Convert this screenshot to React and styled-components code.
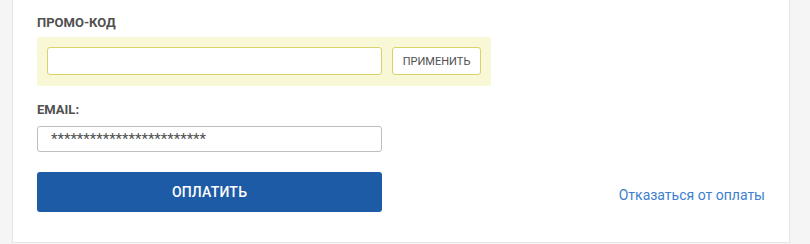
import React from 'react';
import styled, { createGlobalStyle } from 'styled-components';

const GlobalStyle = createGlobalStyle`
  html, body {
    margin: 0;
    padding: 0;
    background: #f5f5f5;
    font-family: Roboto, "Liberation Sans", Arial, sans-serif;
  }
`;

const Page = styled.div`
  width: 810px;
  height: 244px;
  overflow: hidden;
  padding-left: 12px;
  box-sizing: border-box;
`;

const Panel = styled.div`
  width: 778px;
  box-sizing: border-box;
  background: #fff;
  border: 1px solid #e6e6e6;
  border-top: none;
  padding: 15px 24px 30px;
`;

const Label = styled.div`
  font-size: 13px;
  line-height: 16px;
  font-weight: 700;
  color: #505050;
  text-transform: uppercase;
  margin-top: ${(props) => props.top || 0}px;
  margin-bottom: ${(props) => props.bottom || 6}px;
`;

const PromoBox = styled.div`
  display: flex;
  gap: 10px;
  width: 454px;
  box-sizing: border-box;
  padding: 10px 10px 11px;
  background: #f8f8d7;
  border-radius: 3px;
`;

const Input = styled.input`
  display: block;
  box-sizing: border-box;
  width: ${(props) => props.width}px;
  height: ${(props) => props.height}px;
  padding: 0 13px;
  border: 1px solid ${(props) => props.border || '#bdbdbd'};
  border-radius: 3px;
  background: #fff;
  font-family: Roboto, "Liberation Sans", Arial, sans-serif;
  font-size: ${(props) => props.size || 14}px;
  color: #505050;
  outline: none;
`;

const ApplyButton = styled.button`
  box-sizing: border-box;
  width: 89px;
  height: 28px;
  padding: 0;
  border: 1px solid #d8d26a;
  border-radius: 3px;
  background: #fff;
  font-family: Roboto, "Liberation Sans", Arial, sans-serif;
  font-size: 11px;
  color: #505050;
  text-transform: uppercase;
`;

const PayRow = styled.div`
  display: flex;
  justify-content: space-between;
  align-items: center;
  margin-top: 20px;
`;

const PayButton = styled.button`
  width: 345px;
  height: 40px;
  border: none;
  border-radius: 3px;
  background: #1e5ba6;
  color: #fff;
  font-family: Roboto, "Liberation Sans", Arial, sans-serif;
  font-size: 14px;
  font-weight: 500;
  letter-spacing: 0.2px;
  text-transform: uppercase;
`;

const CancelLink = styled.a`
  margin-top: 6px;
  font-size: 14px;
  line-height: 16px;
  color: #3c80cf;
  text-decoration: none;
`;

export default function App() {
  return (
    <Page>
      <GlobalStyle />
      <Panel>
        <Label>Промо-код</Label>
        <PromoBox>
          <Input width={335} height={28} border="#d8d26a" />
          <ApplyButton>Применить</ApplyButton>
        </PromoBox>
        <Label top={16} bottom={8}>Email:</Label>
        <Input width={345} height={26} size={15} readOnly value="************************" />
        <PayRow>
          <PayButton>Оплатить</PayButton>
          <CancelLink href="#">Отказаться от оплаты</CancelLink>
        </PayRow>
      </Panel>
    </Page>
  );
}
